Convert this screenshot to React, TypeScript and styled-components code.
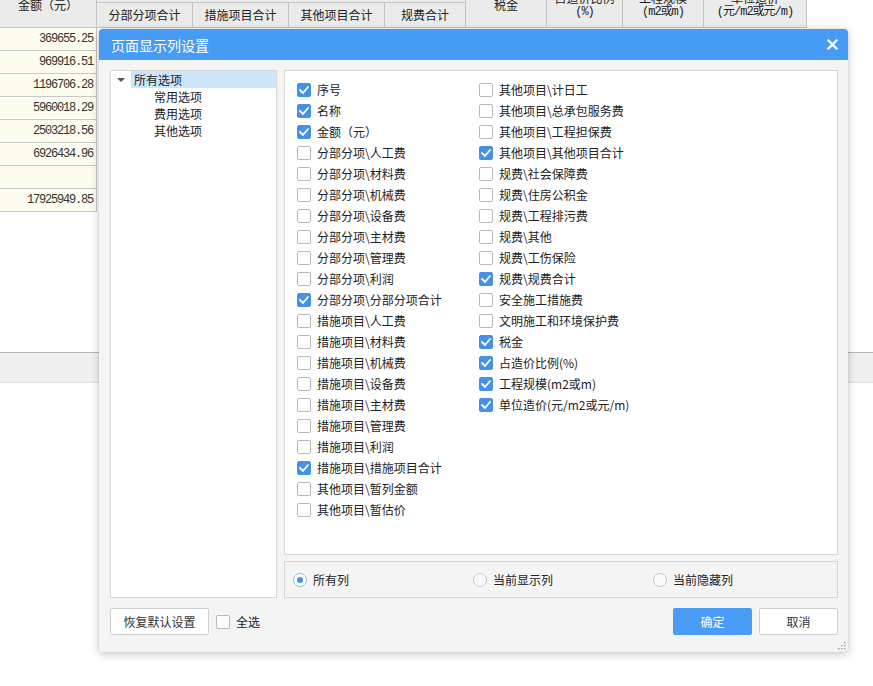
import React from "react";
import styled, { createGlobalStyle } from "styled-components";

const GlobalStyle = createGlobalStyle`
  *, *::before, *::after { box-sizing: border-box; }
  html, body { margin: 0; padding: 0; background: #fff; }
  body {
    font-family: "Noto Sans CJK SC", "Microsoft YaHei", sans-serif;
    font-size: 12px;
    color: #333;
  }
`;

const Page = styled.div`
  position: relative;
  width: 873px;
  height: 686px;
  overflow: hidden;
  background: #fff;
  display: flex;
  flex-direction: column;
`;

const Sheet = styled.div`
  height: 352px;
  flex: none;
  display: flex;
  flex-direction: column;
`;

const HeaderClip = styled.div`
  height: 28px;
  overflow: hidden;
  flex: none;
`;

const HeaderGrid = styled.div`
  margin-top: -18px;
  display: grid;
  grid-template-columns: 97px 96px 96px 96px 81px 81px 76px 81px 103px;
  grid-template-rows: 21px 25px;
  width: max-content;
`;

const HeadCell = styled.div<{ $col: string; $row: string }>`
  grid-column: ${(p) => p.$col};
  grid-row: ${(p) => p.$row};
  background: #ebebeb;
  border-right: 1px solid #c4c4c4;
  border-bottom: 1px solid #c4c4c4;
  display: flex;
  flex-direction: column;
  align-items: center;
  justify-content: center;
  font-size: 12px;
  line-height: 14px;
  color: #222;
  text-align: center;
  white-space: nowrap;
`;

const HeadSub = styled.span`
  font-family: "Liberation Mono", "Noto Sans CJK SC", monospace;
  letter-spacing: -1px;
`;

const AmountColumn = styled.div`
  display: flex;
  flex-direction: column;
  width: 97px;
`;

const AmountCell = styled.div`
  height: 23px;
  background: #fdfdef;
  border-right: 1px solid #c4c4c4;
  border-bottom: 1px solid #c8c8c8;
  display: flex;
  align-items: center;
  justify-content: flex-end;
  padding-right: 3px;
  font-family: "Liberation Mono", monospace;
  font-size: 12px;
  letter-spacing: -1.2px;
  color: #333;
`;

const StatusBand = styled.div`
  height: 31px;
  flex: none;
  background: #f0f0f0;
  border-top: 1px solid #b8b8b8;
  border-bottom: 1px solid #e2e2e2;
`;

/* ---------- Dialog ---------- */

const Dialog = styled.div`
  position: absolute;
  left: 99px;
  top: 29px;
  width: 749px;
  height: 623px;
  background: #f4f4f4;
  border-radius: 4px;
  box-shadow: 0 2px 10px rgba(0, 0, 0, 0.22), 0 0 2px rgba(0, 0, 0, 0.12);
  display: flex;
  flex-direction: column;
`;

const TitleBar = styled.div`
  height: 31px;
  flex: none;
  background: #469bf5;
  border-radius: 4px 4px 0 0;
  display: flex;
  align-items: center;
  justify-content: space-between;
  padding: 0 10px 0 12px;
`;

const Title = styled.span`
  color: #fff;
  font-size: 14px;
  line-height: 16px;
`;

const CloseButton = styled.button`
  border: none;
  background: transparent;
  padding: 0;
  width: 11px;
  height: 11px;
  display: flex;
  align-items: center;
  justify-content: center;
  cursor: pointer;
`;

const Body = styled.div`
  flex: 1;
  display: flex;
  flex-direction: column;
  padding: 10px 10px 17px 11px;
`;

const Main = styled.div`
  height: 528px;
  display: flex;
  gap: 7px;
`;

const TreePanel = styled.div`
  width: 167px;
  flex: none;
  background: #fff;
  border: 1px solid #d6d6d6;
`;

const TreeRow = styled.div<{ $level: number }>`
  height: 17px;
  display: flex;
  align-items: center;
  padding-left: ${(p) => (p.$level === 0 ? 0 : 40)}px;
`;

const TreeToggle = styled.span`
  width: 20px;
  height: 17px;
  flex: none;
  display: flex;
  align-items: center;
  justify-content: center;
  &::before {
    content: "";
    border-left: 4px solid transparent;
    border-right: 4px solid transparent;
    border-top: 4px solid #555;
  }
`;

const TreeLabel = styled.span<{ $selected?: boolean }>`
  flex: ${(p) => (p.$selected ? 1 : "none")};
  height: 17px;
  line-height: 17px;
  padding-left: 3px;
  background: ${(p) => (p.$selected ? "#cce5fa" : "transparent")};
  color: #222;
`;

const RightCol = styled.div`
  flex: 1;
  display: flex;
  flex-direction: column;
  gap: 6px;
`;

const CheckPanel = styled.div`
  height: 485px;
  flex: none;
  background: #fff;
  border: 1px solid #d6d6d6;
  padding: 8px 0 0 12px;
  display: flex;
`;

const CheckColumn = styled.div<{ $width?: number }>`
  width: ${(p) => (p.$width ? `${p.$width}px` : "auto")};
  flex: ${(p) => (p.$width ? "none" : 1)};
  display: flex;
  flex-direction: column;
`;

const CheckRow = styled.label`
  height: 21px;
  display: flex;
  align-items: center;
  gap: 6px;
  color: #222;
  white-space: nowrap;
`;

const Box = styled.span<{ $checked: boolean }>`
  width: 14px;
  height: 14px;
  flex: none;
  border-radius: 2px;
  border: 1px solid ${(p) => (p.$checked ? "#4790e8" : "#b9b9b9")};
  background: ${(p) => (p.$checked ? "#4790e8" : "#fff")};
  display: flex;
  align-items: center;
  justify-content: center;
`;

const RadioPanel = styled.div`
  flex: 1;
  border: 1px solid #d6d6d6;
  background: #f4f4f4;
  padding-left: 8px;
  display: grid;
  grid-template-columns: 180px 180px 180px;
  align-items: center;
`;

const RadioOption = styled.label`
  display: flex;
  align-items: center;
  gap: 6px;
  color: #222;
`;

const RadioDot = styled.span<{ $checked: boolean }>`
  width: 14px;
  height: 14px;
  flex: none;
  border-radius: 50%;
  border: 1px solid ${(p) => (p.$checked ? "#8dbcf0" : "#c8c8c8")};
  background: ${(p) => (p.$checked ? "#fff" : "#f9f9f9")};
  display: flex;
  align-items: center;
  justify-content: center;
  &::after {
    content: "";
    width: 6px;
    height: 6px;
    border-radius: 50%;
    background: ${(p) => (p.$checked ? "#4790e8" : "transparent")};
  }
`;

const Footer = styled.div`
  margin-top: 10px;
  height: 27px;
  display: flex;
  align-items: center;
`;

const Button = styled.button<{ $primary?: boolean; $width: number }>`
  width: ${(p) => p.$width}px;
  height: 27px;
  padding: 0;
  border-radius: 2px;
  border: 1px solid ${(p) => (p.$primary ? "#4a9cf6" : "#cfcfcf")};
  background: ${(p) => (p.$primary ? "#4a9cf6" : "#fff")};
  color: ${(p) => (p.$primary ? "#fff" : "#333")};
  font-family: "Noto Sans CJK SC", sans-serif;
  font-size: 12px;
  cursor: pointer;
`;

const SelectAll = styled.label`
  margin-left: 7px;
  display: flex;
  align-items: center;
  gap: 6px;
  color: #222;
`;

const FooterRight = styled.div`
  margin-left: auto;
  display: flex;
  gap: 7px;
`;

const Grip = styled.div`
  position: absolute;
  right: 2px;
  bottom: 2px;
  width: 9px;
  height: 9px;
  display: flex;
`;

const Check = () => (
  <svg width="10" height="8" viewBox="0 0 10 8">
    <polyline points="1,4 4,7 9,1" fill="none" stroke="#fff" strokeWidth="1.8" strokeLinecap="round" strokeLinejoin="round" />
  </svg>
);

const CheckItem: React.FC<{ label: string; checked: boolean }> = ({ label, checked }) => (
  <CheckRow>
    <Box $checked={checked}>{checked && <Check />}</Box>
    <span>{label}</span>
  </CheckRow>
);

const col1: [string, boolean][] = [
  ["序号", true],
  ["名称", true],
  ["金额（元）", true],
  ["分部分项\\人工费", false],
  ["分部分项\\材料费", false],
  ["分部分项\\机械费", false],
  ["分部分项\\设备费", false],
  ["分部分项\\主材费", false],
  ["分部分项\\管理费", false],
  ["分部分项\\利润", false],
  ["分部分项\\分部分项合计", true],
  ["措施项目\\人工费", false],
  ["措施项目\\材料费", false],
  ["措施项目\\机械费", false],
  ["措施项目\\设备费", false],
  ["措施项目\\主材费", false],
  ["措施项目\\管理费", false],
  ["措施项目\\利润", false],
  ["措施项目\\措施项目合计", true],
  ["其他项目\\暂列金额", false],
  ["其他项目\\暂估价", false],
];

const col2: [string, boolean][] = [
  ["其他项目\\计日工", false],
  ["其他项目\\总承包服务费", false],
  ["其他项目\\工程担保费", false],
  ["其他项目\\其他项目合计", true],
  ["规费\\社会保障费", false],
  ["规费\\住房公积金", false],
  ["规费\\工程排污费", false],
  ["规费\\其他", false],
  ["规费\\工伤保险", false],
  ["规费\\规费合计", true],
  ["安全施工措施费", false],
  ["文明施工和环境保护费", false],
  ["税金", true],
  ["占造价比例(%)", true],
  ["工程规模(m2或m)", true],
  ["单位造价(元/m2或元/m)", true],
];

const amounts = [
  "369655.25",
  "969916.51",
  "1196706.28",
  "5960018.29",
  "2503218.56",
  "6926434.96",
  "",
  "17925949.85",
];

export default function App() {
  return (
    <>
      <GlobalStyle />
      <Page>
        <Sheet>
          <HeaderClip>
            <HeaderGrid>
              <HeadCell $col="1" $row="1 / 3">金额（元）</HeadCell>
              <HeadCell $col="2 / 6" $row="1" />
              <HeadCell $col="2" $row="2">分部分项合计</HeadCell>
              <HeadCell $col="3" $row="2">措施项目合计</HeadCell>
              <HeadCell $col="4" $row="2">其他项目合计</HeadCell>
              <HeadCell $col="5" $row="2">规费合计</HeadCell>
              <HeadCell $col="6" $row="1 / 3">税金</HeadCell>
              <HeadCell $col="7" $row="1 / 3">
                <span>占造价比例</span>
                <HeadSub>(%)</HeadSub>
              </HeadCell>
              <HeadCell $col="8" $row="1 / 3">
                <span>工程规模</span>
                <HeadSub>(m2或m)</HeadSub>
              </HeadCell>
              <HeadCell $col="9" $row="1 / 3">
                <span>单位造价</span>
                <HeadSub>(元/m2或元/m)</HeadSub>
              </HeadCell>
            </HeaderGrid>
          </HeaderClip>
          <AmountColumn>
            {amounts.map((a, i) => (
              <AmountCell key={i}>{a}</AmountCell>
            ))}
          </AmountColumn>
        </Sheet>
        <StatusBand />

        <Dialog>
          <TitleBar>
            <Title>页面显示列设置</Title>
            <CloseButton aria-label="close">
              <svg width="11" height="11" viewBox="0 0 11 11">
                <path d="M1.5 1.5 L9.5 9.5 M9.5 1.5 L1.5 9.5" stroke="#fff" strokeWidth="2.4" strokeLinecap="square" />
              </svg>
            </CloseButton>
          </TitleBar>
          <Body>
            <Main>
              <TreePanel>
                <TreeRow $level={0}>
                  <TreeToggle />
                  <TreeLabel $selected>所有选项</TreeLabel>
                </TreeRow>
                <TreeRow $level={1}>
                  <TreeLabel>常用选项</TreeLabel>
                </TreeRow>
                <TreeRow $level={1}>
                  <TreeLabel>费用选项</TreeLabel>
                </TreeRow>
                <TreeRow $level={1}>
                  <TreeLabel>其他选项</TreeLabel>
                </TreeRow>
              </TreePanel>
              <RightCol>
                <CheckPanel>
                  <CheckColumn $width={182}>
                    {col1.map(([l, c]) => (
                      <CheckItem key={l} label={l} checked={c} />
                    ))}
                  </CheckColumn>
                  <CheckColumn>
                    {col2.map(([l, c]) => (
                      <CheckItem key={l} label={l} checked={c} />
                    ))}
                  </CheckColumn>
                </CheckPanel>
                <RadioPanel>
                  <RadioOption>
                    <RadioDot $checked />
                    <span>所有列</span>
                  </RadioOption>
                  <RadioOption>
                    <RadioDot $checked={false} />
                    <span>当前显示列</span>
                  </RadioOption>
                  <RadioOption>
                    <RadioDot $checked={false} />
                    <span>当前隐藏列</span>
                  </RadioOption>
                </RadioPanel>
              </RightCol>
            </Main>
            <Footer>
              <Button $width={99}>恢复默认设置</Button>
              <SelectAll>
                <Box $checked={false} />
                <span>全选</span>
              </SelectAll>
              <FooterRight>
                <Button $primary $width={79}>确定</Button>
                <Button $width={79}>取消</Button>
              </FooterRight>
            </Footer>
          </Body>
          <Grip>
            <svg width="9" height="9" viewBox="0 0 9 9">
              {[
                [7, 1], [4, 4], [7, 4], [1, 7], [4, 7], [7, 7],
              ].map(([x, y], i) => (
                <rect key={i} x={x} y={y} width="1.4" height="1.4" fill="#9a9a9a" />
              ))}
            </svg>
          </Grip>
        </Dialog>
      </Page>
    </>
  );
}
